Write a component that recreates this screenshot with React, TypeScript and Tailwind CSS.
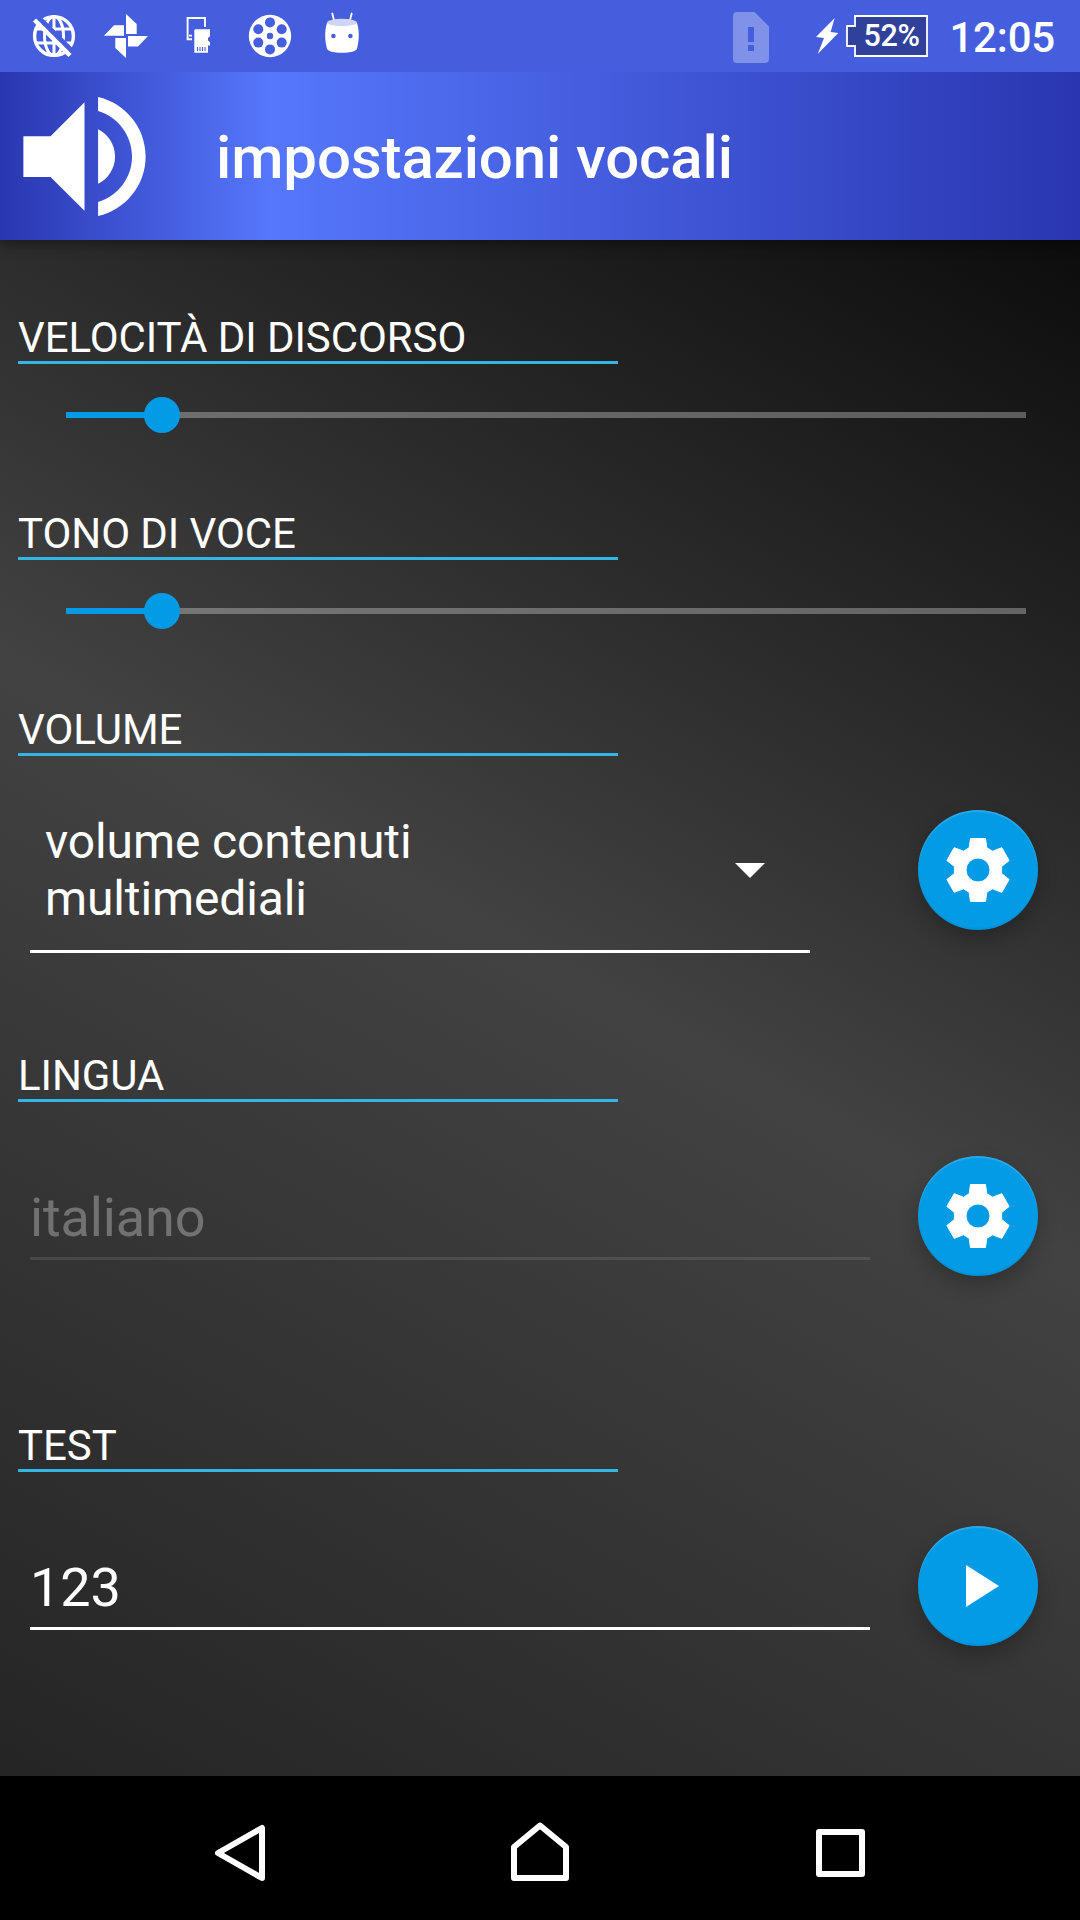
import React from 'react';
import { MdPlayArrow, MdVolumeUp } from 'react-icons/md';

interface SectionProps {
  title: string;
  className: string;
  children: React.ReactNode;
}

const GlobeOffIcon = () => (
  <svg className="h-12 w-12" viewBox="0 0 48 48" fill="none" stroke="#fff" strokeWidth="3">
    <circle cx="24" cy="24" r="19.4" strokeWidth="3.4" />
    <ellipse cx="24" cy="24" rx="9.5" ry="19.4" />
    <path d="M24 5v38M6 17h36M6 31h36" />
    <path d="M7 4 45 42" stroke="#455ede" strokeWidth="5" />
    <path d="M4.5 8 40 43.5" strokeWidth="4.4" />
  </svg>
);

const PinwheelIcon = () => (
  <svg className="h-12 w-12" viewBox="0 0 48 48" fill="#fff">
    <path d="M24 2 34.7 12v10H24zM46 24H26v10.5h10zM24 46 13.3 36V26H24zM2 23.7l10-10.4h10v10.4z" />
  </svg>
);

const SdTransferIcon = () => (
  <svg className="h-12 w-12" viewBox="0 0 48 48">
    <path d="M31 15V6H13.6v21.2H18M15 23.6h3" fill="none" stroke="#fff" strokeWidth="1.9" />
    <path d="M20.3 18 21.3 17.3H36v7l-2 1.7v2.5l2 1.7v3.3h-2v7.2H20.3z" fill="#fff" />
    <path d="M23.5 35v4M26 35v4M28.5 35v4M31 35v4" stroke="#455ede" strokeWidth="1.1" />
  </svg>
);

const FilmReelIcon = () => (
  <svg className="h-12 w-12" viewBox="0 0 48 48">
    <circle cx="24" cy="24" r="21.2" fill="#fff" />
    <g fill="#455ede">
      <circle cx="24" cy="24" r="3.2" />
      <circle cx="24" cy="10.4" r="5" />
      <circle cx="35.7" cy="17.2" r="5" />
      <circle cx="35.7" cy="30.6" r="5" />
      <circle cx="24" cy="37.4" r="5" />
      <circle cx="12.3" cy="30.6" r="5" />
      <circle cx="12.3" cy="17.2" r="5" />
    </g>
  </svg>
);

const DroidIcon = () => (
  <svg className="h-12 w-12" viewBox="0 0 48 48">
    <path d="M14.3 1.5l2 8M33.7 1.5l-2 8" stroke="#fff" strokeWidth="1.8" strokeLinecap="round" />
    <path d="M9 11C6.6 18 6.6 28 9 36.5c.6 2.8 6 4.2 15 4.2s14.400-1.400 15-4.200C41.400 28 41.400 18 39 11z" fill="#fff" />
    <ellipse cx="24" cy="10.500" rx="15" ry="3.700" fill="#ced5f7" />
    <circle cx="15.400" cy="24" r="2.300" fill="#455ede" />
    <circle cx="32.400" cy="24" r="2.300" fill="#455ede" />
  </svg>
);

const SimAlertIcon = () => (
  <svg className="h-[51px] w-9" viewBox="0 0 36 51">
    <path d="M4 0h17.500L36 14.500V47a4 4 0 0 1-4 4H4a4 4 0 0 1-4-4V4a4 4 0 0 1 4-4z" fill="#8091e9" />
    <path d="M15 15h6v15h-6zM15 33h6v6h-6z" fill="#455ede" />
  </svg>
);

const BoltIcon = () => (
  <svg className="h-9 w-[23px]" viewBox="0 0 23 36">
    <path d="M18.700 0 0 19l8 1-6.300 16L22.300 15l-7.700-1z" fill="#fff" />
  </svg>
);

const Battery = () => (
  <div className="relative h-[42px] w-[82px]">
    <svg className="h-full w-full" viewBox="0 0 82 42">
      <path d="M9 1h72v40H9V31H1V11h8z" fill="#30419b" stroke="#fff" strokeWidth="1.800" />
    </svg>
    <span className="absolute top-0 left-[17px] text-[30.500px] leading-[42px] font-medium tracking-[-0.3px]">52%</span>
  </div>
);

const StatusBar = () => (
  <div className="relative z-20 flex h-[72px] items-center justify-between bg-[#455ede] pr-[25px] pl-[30px]">
    <div className="flex gap-6">
      <GlobeOffIcon />
      <PinwheelIcon />
      <SdTransferIcon />
      <FilmReelIcon />
      <DroidIcon />
    </div>
    <div className="flex items-center">
      <div className="mr-[47px] pt-[3px]">
        <SimAlertIcon />
      </div>
      <BoltIcon />
      <div className="mr-[21px] ml-[7px]">
        <Battery />
      </div>
      <span className="pt-[3px] text-[42px] leading-[48px] font-medium tracking-[-0.2px]">12:05</span>
    </div>
  </div>
);

const Toolbar = () => (
  <header className="z-10 flex h-[168px] items-center bg-[linear-gradient(90deg,#2a36b1_0%,#5677fc_25%,#2a36b1_100%)] pl-[3px] shadow-[0_4px_12px_rgba(0,0,0,0.4)]">
    <MdVolumeUp className="h-[163px] w-[163px]" />
    <h1 className="ml-[50px] pt-[3px] text-[60px] leading-[70px] font-medium tracking-[-0.13px]">impostazioni vocali</h1>
  </header>
);

const Section = ({ title, className, children }: SectionProps) => (
  <section className={className}>
    <h2 className="ml-[18px] w-[600px] border-b-[3px] border-[#33b5e5] pt-[2px] text-[42px] leading-[46px] tracking-[-0.06px]">
      {title}
    </h2>
    {children}
  </section>
);

const Slider = ({ value }: { value: number }) => (
  <div className="relative mt-[33px] ml-[66px] flex h-9 w-[960px] items-center">
    <div className="h-[6px] w-full bg-white/30">
      <div className="h-full bg-[#039be5]" style={{ width: `${value}%` }} />
    </div>
    <div className="absolute h-9 w-9 -translate-x-1/2 rounded-full bg-[#039be5]" style={{ left: `${value}%` }} />
  </div>
);

const Fab = ({ label, children }: { label: string; children: React.ReactNode }) => (
  <button
    aria-label={label}
    className="flex h-[120px] w-[120px] items-center justify-center rounded-full bg-[#039be5] shadow-[0_9px_20px_rgba(0,0,0,0.24),inset_0_2px_1px_rgba(255,255,255,0.15),inset_0_-2px_1px_rgba(0,0,0,0.06)]"
  >
    {children}
  </button>
);

const GearIcon = () => (
  <svg className="h-[66px] w-[66px]" viewBox="-33 -33 66 66">
    <path
      fillRule="evenodd"
      fill="#fff"
      stroke="#fff"
      strokeLinejoin="round"
      d="M-7.500-31.500h15l1.300 9.200 5.700 3.500 9.300-3.500 7.300 12.800-7.500 6v7l7.500 6-7.300 12.800-9.300-3.500-5.700 3.500-1.300 9.200h-15l-1.300-9.200-5.700-3.500-9.300 3.500-7.300-12.800 7.500-6v-7l-7.500-6 7.300-12.800 9.300 3.500 5.700-3.500zM0-12a12 12 0 1 0 0 24 12 12 0 1 0 0-24z"
    />
  </svg>
);

const NavBar = () => (
  <nav className="flex h-36 items-center justify-between bg-black px-[203px]">
    <svg className="h-[72px] w-[72px]" viewBox="0 0 72 72" fill="none" stroke="#fff" strokeWidth="6" strokeLinejoin="round">
      <path d="M59 16v50L15 41z" />
    </svg>
    <svg className="h-[72px] w-[72px]" viewBox="0 0 72 72" fill="none" stroke="#fff" strokeWidth="6" strokeLinejoin="round">
      <path d="M36 13.500 62 35v31H10V35z" />
    </svg>
    <svg className="h-[72px] w-[72px]" viewBox="0 0 72 72" fill="none" stroke="#fff" strokeWidth="6" strokeLinejoin="round">
      <path d="M14 20h43v42H14z" />
    </svg>
  </nav>
);

export default function App() {
  return (
    <div className="flex h-[1920px] w-[1080px] flex-col overflow-hidden bg-[linear-gradient(209.36deg,#000_0%,#424242_50%,#212121_100%)] font-['Roboto',sans-serif] text-white">
      <StatusBar />
      <Toolbar />

      <main className="flex-1 pt-[73px]">
        <Section title="VELOCITÀ DI DISCORSO" className="h-[196px]">
          <Slider value={10} />
        </Section>

        <Section title="TONO DI VOCE" className="h-[196px]">
          <Slider value={10} />
        </Section>

        <Section title="VOLUME" className="h-[346px]">
          <div className="flex items-start justify-between pt-[54px] pr-[42px] pl-[30px]">
            <div className="flex w-[780px] items-center justify-between border-b-[3px] border-white pt-[3px] pr-[45px] pb-[23px] pl-[15px]">
              <p className="w-[400px] text-[48px] leading-[57px] tracking-[-0.12px]">volume contenuti multimediali</p>
              <svg className="h-[15px] w-[30px]" viewBox="0 0 30 15">
                <path d="M0 0h30L15 15z" fill="#fff" />
              </svg>
            </div>
            <Fab label="volume">
              <GearIcon />
            </Fab>
          </div>
        </Section>

        <Section title="LINGUA" className="h-[370px]">
          <div className="flex items-start justify-between pt-[54px] pr-[42px] pl-[30px]">
            <div className="w-[840px] border-b-[3px] border-white/10 pt-[30px] pb-[7px] text-[54px] leading-[64px] tracking-[-0.12px] text-white/30">
              italiano
            </div>
            <Fab label="lingua">
              <GearIcon />
            </Fab>
          </div>
        </Section>

        <Section title="TEST" className="h-[355px]">
          <div className="flex items-start justify-between pt-[54px] pr-[42px] pl-[30px]">
            <div className="w-[840px] border-b-[3px] border-white pt-[30px] pb-[7px] text-[54px] leading-[64px] tracking-[-0.12px]">
              123
            </div>
            <Fab label="test">
              <MdPlayArrow className="h-[72px] w-[72px]" />
            </Fab>
          </div>
        </Section>
      </main>

      <NavBar />
    </div>
  );
}
